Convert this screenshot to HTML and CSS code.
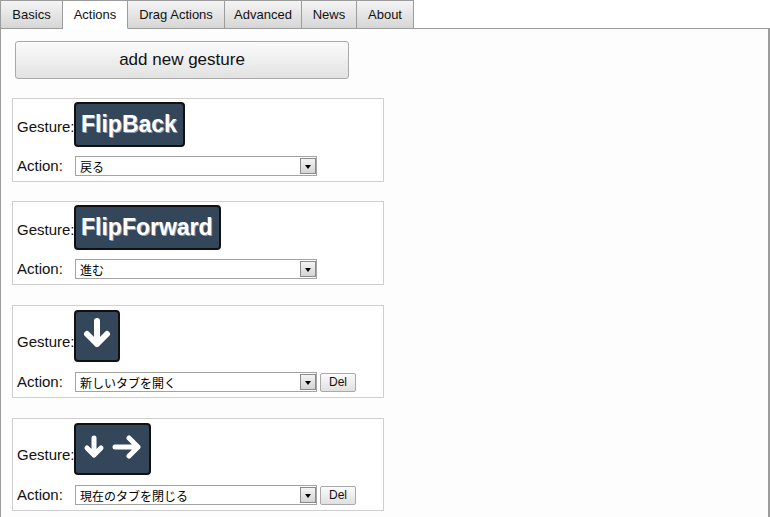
FILE: index.html
```html
<!DOCTYPE html>
<html lang="ja">

<head>
  <meta charset="UTF-8" />
  <title>Gesture Options</title>
  <link rel="stylesheet" href="styles.css">
</head>

<body>
  <ul class="tabs">
    <li>Basics</li>
    <li class="active">Actions</li>
    <li>Drag Actions</li>
    <li>Advanced</li>
    <li>News</li>
    <li>About</li>
  </ul>

  <div class="panel">
    <button class="add-btn">add new gesture</button>

    <!-- gesture list -->
    <div class="gesture">
      <span class="label">Gesture:</span>
      <span class="icon text">FlipBack</span>
      <span class="label">Action:</span>
      <div class="action">
        <div class="select"><select><option>戻る</option></select><span class="drop"></span></div>
      </div>
    </div>

    <div class="gesture">
      <span class="label">Gesture:</span>
      <span class="icon text">FlipForward</span>
      <span class="label">Action:</span>
      <div class="action">
        <div class="select"><select><option>進む</option></select><span class="drop"></span></div>
      </div>
    </div>

    <div class="gesture custom">
      <span class="label">Gesture:</span>
      <span class="icon arrows">
        <svg width="30" height="30" viewBox="0 0 30 30"><path d="M15 3 V26 M5 16 L15 26 L25 16" /></svg>
      </span>
      <span class="label">Action:</span>
      <div class="action">
        <div class="select"><select><option>新しいタブを開く</option></select><span class="drop"></span></div>
        <button class="del">Del</button>
      </div>
    </div>

    <div class="gesture custom">
      <span class="label">Gesture:</span>
      <span class="icon arrows double">
        <svg width="22" height="24" viewBox="0 0 22 24"><path d="M11 3 V20 M4 13 L11 20 L18 13" /></svg>
        <svg width="30" height="24" viewBox="0 0 30 24"><path d="M3 12 H26 M17 3 L26 12 L17 21" /></svg>
      </span>
      <span class="label">Action:</span>
      <div class="action">
        <div class="select"><select><option>現在のタブを閉じる</option></select><span class="drop"></span></div>
        <button class="del">Del</button>
      </div>
    </div>
  </div>
</body>

</html>
```

FILE: styles.css
```css
* {
  box-sizing: border-box;
  margin: 0;
  padding: 0;
}
body {
  font-family: "Liberation Sans", Arial, sans-serif;
  color: #111;
  background: #fff;
}
/* Tabs */
.tabs {
  display: flex;
  list-style: none;
  height: 29px;
}
.tabs li {
  font-size: 13px;
  line-height: 15px;
  text-align: center;
  padding: 6px 0;
  height: 29px;
  border: 1px solid #9c9c9c;
  border-left: none;
  background: linear-gradient(#f4f4f4, #d6d6d6);
}
.tabs li:nth-child(1) { width: 63px; border-left: 1px solid #9c9c9c; }
.tabs li:nth-child(2) { width: 65px; }
.tabs li:nth-child(3) { width: 97px; }
.tabs li:nth-child(4) { width: 77px; }
.tabs li:nth-child(5) { width: 55px; }
.tabs li:nth-child(6) { width: 57px; }
.tabs li.active {
  background: #fff;
  border-bottom-color: #fff;
  position: relative;
  z-index: 1;
}
.panel {
  margin-top: -1px;
  width: 770px;
  min-height: 500px;
  border: 1px solid #9c9c9c;
  border-right: 2px solid #9c9c9c;
  background: #fdfdfd;
  padding: 12px 0 0 11px;
}
.add-btn {
  display: block;
  margin-left: 3px;
  width: 334px;
  height: 38px;
  font-family: inherit;
  font-size: 17px;
  color: #111;
  border: 1px solid #a9a9a9;
  border-radius: 3px;
  background: linear-gradient(#fbfbfb, #e2e2e2);
}
/* Gesture cards */
.gesture {
  display: grid;
  grid-template-columns: 57px auto;
  align-items: end;
  row-gap: 9px;
  width: 372px;
  margin-top: 19px;
  padding: 3px 4px 5px 4px;
  border: 1px solid #cfcfcf;
  background: #fff;
}
.gesture.custom {
  row-gap: 10px;
  margin-top: 20px;
}
.label {
  font-size: 15px;
  line-height: 18px;
  margin-bottom: 11px;
}
.icon + .label {
  align-self: center;
  margin-bottom: 0;
}
.icon {
  justify-self: start;
  display: flex;
  align-items: center;
  background: #34465a;
  border: 2px solid #111;
  border-radius: 4px;
  color: #fff;
}
.icon.text {
  height: 45px;
  padding: 0 6px 0 5px;
  font-weight: bold;
  font-size: 23px;
  text-shadow: 1px 1px 0 #8a9ab0;
}
.icon.arrows {
  height: 52px;
  margin-top: 1px;
  padding: 0 6px 6px 6px;
}
.icon.arrows.double {
  padding: 0 7px 4px 7px;
  gap: 7px;
}
.icon svg path {
  fill: none;
  stroke: #fff;
  stroke-width: 6;
  stroke-linecap: round;
  stroke-linejoin: round;
}
.icon.double svg path {
  stroke-width: 5;
}
.action {
  display: flex;
  align-items: center;
  gap: 3px;
}
.select {
  position: relative;
  margin-left: 1px;
}
.select select {
  appearance: none;
  display: block;
  width: 242px;
  height: 20px;
  padding: 0 4px;
  font-family: "Noto Sans CJK JP", sans-serif;
  font-size: 12px;
  color: #000;
  background: #fff;
  border: 1px solid #a3a3a3;
  border-radius: 0;
}
.drop {
  position: absolute;
  right: 1px;
  top: 2px;
  width: 16px;
  height: 16px;
  border: 1px solid #8a8a8a;
  background: linear-gradient(#f4f4f4, #d4d4d4);
}
.drop::after {
  content: "";
  position: absolute;
  left: 4px;
  top: 6px;
  border-left: 3px solid transparent;
  border-right: 3px solid transparent;
  border-top: 4px solid #000;
}
.del {
  width: 36px;
  height: 19px;
  font-family: inherit;
  font-size: 12px;
  color: #111;
  border: 1px solid #a9a9a9;
  border-radius: 2px;
  background: linear-gradient(#fbfbfb, #e0e0e0);
}
```
